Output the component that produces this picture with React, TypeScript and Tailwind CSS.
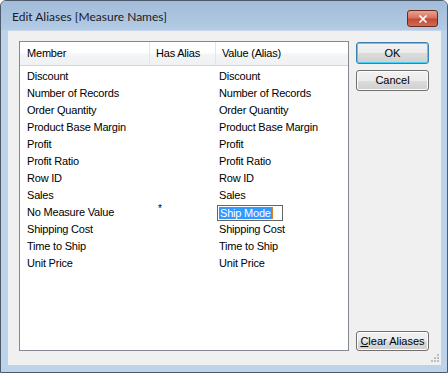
import { X } from "lucide-react";

const members = [
  "Discount",
  "Number of Records",
  "Order Quantity",
  "Product Base Margin",
  "Profit",
  "Profit Ratio",
  "Row ID",
  "Sales",
  "No Measure Value",
  "Shipping Cost",
  "Time to Ship",
  "Unit Price",
];

const values = [
  "Discount",
  "Number of Records",
  "Order Quantity",
  "Product Base Margin",
  "Profit",
  "Profit Ratio",
  "Row ID",
  "Sales",
  "Ship Mode",
  "Shipping Cost",
  "Time to Ship",
  "Unit Price",
];

function Button({ label, def, h }: { label: React.ReactNode; def?: boolean; h: string }) {
  return (
    <div
      className={`w-[73px] ${h} rounded-[3px] border ${
        def ? "border-[#3c7fb1] shadow-[inset_0_0_0_1px_#48d0f6]" : "border-[#707070] shadow-[inset_0_0_0_1px_#fcfcfc]"
      } bg-[linear-gradient(#f2f2f2_0%,#ebebeb_50%,#dddddd_50%,#cfcfcf_100%)] flex items-center justify-center text-[11px] text-black`}
    >
      {label}
    </div>
  );
}

export default function App() {
  return (
    <div
      className="w-[448px] h-[373px] bg-[#bcd3ea] border border-[#4d5a69] rounded-t-[6px] flex flex-col overflow-hidden"
      style={{ fontFamily: "'Liberation Sans', Arial, sans-serif" }}
    >
      {/* title bar */}
      <div className="h-[29px] shrink-0 bg-[linear-gradient(#a2bcd9,#b3cbe4)] flex items-start pl-[11px] pr-[9px]">
        <span
          className="mt-[7px] text-[12px] text-[#1a1a2a]"
          style={{ fontFamily: "Lato, 'Noto Sans', sans-serif" }}
        >
          Edit Aliases [Measure Names]
        </span>
        <div className="ml-auto mt-[9px] w-[31px] h-[17px] rounded-[3px] border border-[#6b2a20] bg-[linear-gradient(#e8a393_0%,#d7725e_45%,#c44a35_55%,#cf6d55_100%)] flex items-center justify-center">
          <X size={12} strokeWidth={3.5} className="text-white" />
        </div>
      </div>

      <div className="flex-1 flex pl-[7px] pr-[6px] pb-[7px]">
        {/* client area */}
        <div className="flex-1 bg-[#f0f0f0] border-t border-[#c8d8ea] flex pl-[11px] pt-[10px] pb-[14px] pr-[12px] relative">
          <div className="w-[330px] border border-[#828790] bg-white flex flex-col tracking-[-0.2px]">
            <div className="h-[24px] shrink-0 flex text-[11px] text-black bg-[linear-gradient(#ffffff_0%,#ffffff_45%,#f3f4f6_55%,#f0f1f3_100%)] border-b border-[#d5d5d5]">
              <div className="w-[130px] pl-[7px] flex items-center border-r border-[#e3e5e8]">Member</div>
              <div className="w-[66px] pl-[6px] flex items-center border-r border-[#e3e5e8]">Has Alias</div>
              <div className="flex-1 pl-[6px] flex items-center">Value (Alias)</div>
            </div>
            <div className="pt-[2px] flex flex-col">
              {members.map((m, i) => (
                <div key={m} className="h-[17px] flex items-center text-[11px] text-black">
                  <div className="w-[130px] pl-[7px]">{m}</div>
                  <div className="w-[66px] relative h-full">
                    {i === 8 && <span className="absolute left-[8px] -top-[3px] text-[10px]">*</span>}
                  </div>
                  <div className="flex-1">
                    {i === 8 ? (
                      <div className="ml-[1px] w-[66px] h-[16px] border border-[#646464] bg-white flex items-center pl-[1px]">
                        <span className="bg-[#3399ff] text-white px-[1px] leading-[12px]">{values[i]}</span>
                        <span className="w-[1px] h-[12px] bg-[#e08020]" />
                      </div>
                    ) : (
                      <span className="pl-[3px]">{values[i]}</span>
                    )}
                  </div>
                </div>
              ))}
            </div>
          </div>

          <div className="ml-[7px] pt-[1px] flex flex-col">
            <Button label="OK" def h="h-[22px]" />
            <div className="h-[6px]" />
            <Button label="Cancel" h="h-[21px]" />
            <div className="flex-1" />
            <Button
              label={
                <span>
                  <span className="underline">C</span>lear Aliases
                </span>
              }
              h="h-[20px]"
            />
          </div>

          {/* size grip */}
          <svg className="absolute right-[2px] bottom-[2px]" width="10" height="10" viewBox="0 0 10 10">
            {[
              [8, 0],
              [8, 3],
              [5, 3],
              [8, 6],
              [5, 6],
              [2, 6],
            ].map(([x, y]) => (
              <rect key={`${x}-${y}`} x={x} y={y + 1} width="2" height="2" fill="#b8bcc4" />
            ))}
          </svg>
        </div>
      </div>
    </div>
  );
}
